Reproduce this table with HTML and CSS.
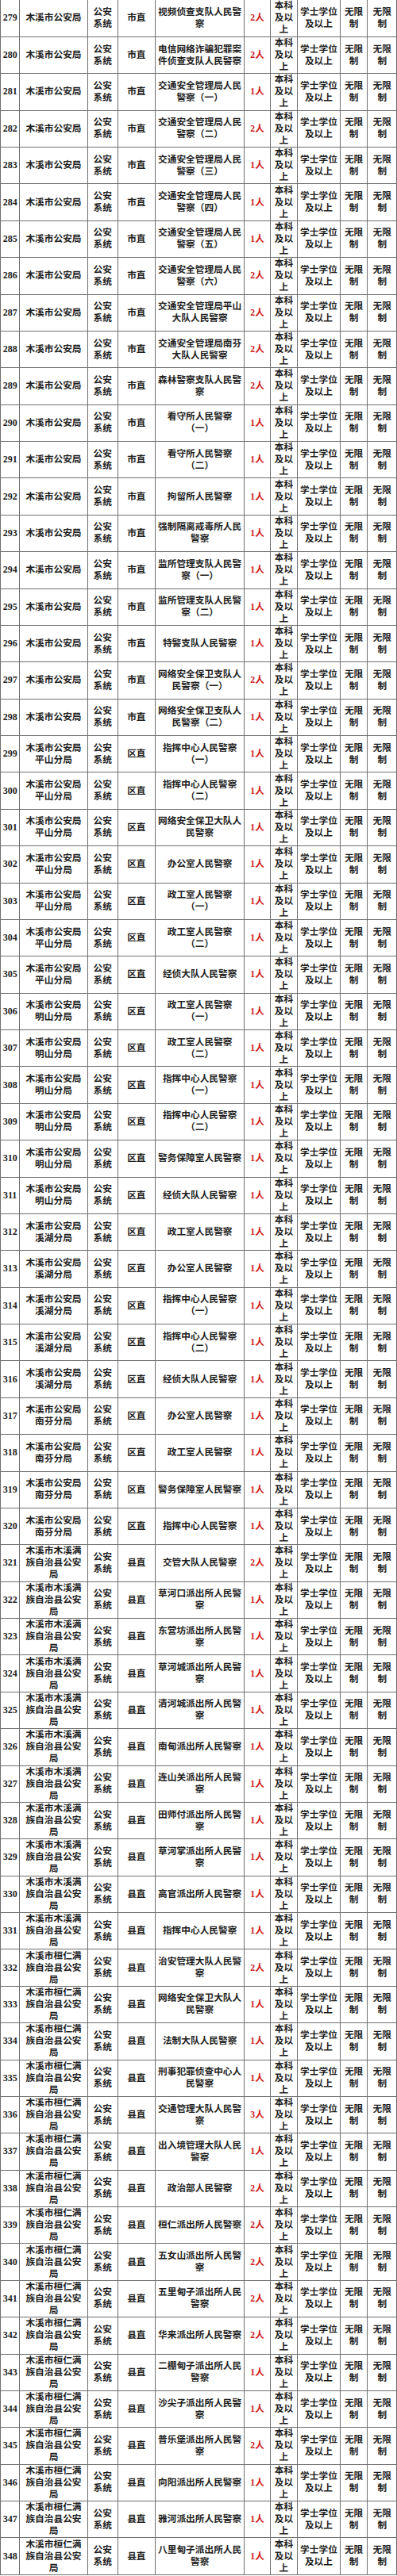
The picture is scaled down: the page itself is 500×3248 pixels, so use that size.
FILE: index.html
```html
<!DOCTYPE html>
<html lang="zh-CN">
<head>
<meta charset="utf-8">
<title>岗位表</title>
<link rel="stylesheet" href="styles.css">
</head>
<body>
<table class="jobs">
<colgroup>
<col class="c1"><col class="c2"><col class="c3"><col class="c4"><col class="c5"><col class="c6"><col class="c7"><col class="c8"><col class="c9"><col class="c10">
</colgroup>
<tbody>
<tr><td class="no">279</td><td>木溪市公安局</td><td>公安<br>系统</td><td>市直</td><td>视频侦查支队人民警<br>察</td><td class="cnt">2人</td><td>本科<br>及以<br>上</td><td>学士学位<br>及以上</td><td>无限<br>制</td><td>无限<br>制</td></tr>
<tr><td class="no">280</td><td>木溪市公安局</td><td>公安<br>系统</td><td>市直</td><td>电信网络诈骗犯罪案<br>件侦查支队人民警察</td><td class="cnt">2人</td><td>本科<br>及以<br>上</td><td>学士学位<br>及以上</td><td>无限<br>制</td><td>无限<br>制</td></tr>
<tr><td class="no">281</td><td>木溪市公安局</td><td>公安<br>系统</td><td>市直</td><td>交通安全管理局人民<br>警察（一）</td><td class="cnt">1人</td><td>本科<br>及以<br>上</td><td>学士学位<br>及以上</td><td>无限<br>制</td><td>无限<br>制</td></tr>
<tr><td class="no">282</td><td>木溪市公安局</td><td>公安<br>系统</td><td>市直</td><td>交通安全管理局人民<br>警察（二）</td><td class="cnt">2人</td><td>本科<br>及以<br>上</td><td>学士学位<br>及以上</td><td>无限<br>制</td><td>无限<br>制</td></tr>
<tr><td class="no">283</td><td>木溪市公安局</td><td>公安<br>系统</td><td>市直</td><td>交通安全管理局人民<br>警察（三）</td><td class="cnt">1人</td><td>本科<br>及以<br>上</td><td>学士学位<br>及以上</td><td>无限<br>制</td><td>无限<br>制</td></tr>
<tr><td class="no">284</td><td>木溪市公安局</td><td>公安<br>系统</td><td>市直</td><td>交通安全管理局人民<br>警察（四）</td><td class="cnt">1人</td><td>本科<br>及以<br>上</td><td>学士学位<br>及以上</td><td>无限<br>制</td><td>无限<br>制</td></tr>
<tr><td class="no">285</td><td>木溪市公安局</td><td>公安<br>系统</td><td>市直</td><td>交通安全管理局人民<br>警察（五）</td><td class="cnt">1人</td><td>本科<br>及以<br>上</td><td>学士学位<br>及以上</td><td>无限<br>制</td><td>无限<br>制</td></tr>
<tr><td class="no">286</td><td>木溪市公安局</td><td>公安<br>系统</td><td>市直</td><td>交通安全管理局人民<br>警察（六）</td><td class="cnt">2人</td><td>本科<br>及以<br>上</td><td>学士学位<br>及以上</td><td>无限<br>制</td><td>无限<br>制</td></tr>
<tr><td class="no">287</td><td>木溪市公安局</td><td>公安<br>系统</td><td>市直</td><td>交通安全管理局平山<br>大队人民警察</td><td class="cnt">2人</td><td>本科<br>及以<br>上</td><td>学士学位<br>及以上</td><td>无限<br>制</td><td>无限<br>制</td></tr>
<tr><td class="no">288</td><td>木溪市公安局</td><td>公安<br>系统</td><td>市直</td><td>交通安全管理局南芬<br>大队人民警察</td><td class="cnt">2人</td><td>本科<br>及以<br>上</td><td>学士学位<br>及以上</td><td>无限<br>制</td><td>无限<br>制</td></tr>
<tr><td class="no">289</td><td>木溪市公安局</td><td>公安<br>系统</td><td>市直</td><td>森林警察支队人民警<br>察</td><td class="cnt">2人</td><td>本科<br>及以<br>上</td><td>学士学位<br>及以上</td><td>无限<br>制</td><td>无限<br>制</td></tr>
<tr><td class="no">290</td><td>木溪市公安局</td><td>公安<br>系统</td><td>市直</td><td>看守所人民警察<br>（一）</td><td class="cnt">1人</td><td>本科<br>及以<br>上</td><td>学士学位<br>及以上</td><td>无限<br>制</td><td>无限<br>制</td></tr>
<tr><td class="no">291</td><td>木溪市公安局</td><td>公安<br>系统</td><td>市直</td><td>看守所人民警察<br>（二）</td><td class="cnt">1人</td><td>本科<br>及以<br>上</td><td>学士学位<br>及以上</td><td>无限<br>制</td><td>无限<br>制</td></tr>
<tr><td class="no">292</td><td>木溪市公安局</td><td>公安<br>系统</td><td>市直</td><td>拘留所人民警察</td><td class="cnt">1人</td><td>本科<br>及以<br>上</td><td>学士学位<br>及以上</td><td>无限<br>制</td><td>无限<br>制</td></tr>
<tr><td class="no">293</td><td>木溪市公安局</td><td>公安<br>系统</td><td>市直</td><td>强制隔离戒毒所人民<br>警察</td><td class="cnt">1人</td><td>本科<br>及以<br>上</td><td>学士学位<br>及以上</td><td>无限<br>制</td><td>无限<br>制</td></tr>
<tr><td class="no">294</td><td>木溪市公安局</td><td>公安<br>系统</td><td>市直</td><td>监所管理支队人民警<br>察（一）</td><td class="cnt">1人</td><td>本科<br>及以<br>上</td><td>学士学位<br>及以上</td><td>无限<br>制</td><td>无限<br>制</td></tr>
<tr><td class="no">295</td><td>木溪市公安局</td><td>公安<br>系统</td><td>市直</td><td>监所管理支队人民警<br>察（二）</td><td class="cnt">1人</td><td>本科<br>及以<br>上</td><td>学士学位<br>及以上</td><td>无限<br>制</td><td>无限<br>制</td></tr>
<tr><td class="no">296</td><td>木溪市公安局</td><td>公安<br>系统</td><td>市直</td><td>特警支队人民警察</td><td class="cnt">1人</td><td>本科<br>及以<br>上</td><td>学士学位<br>及以上</td><td>无限<br>制</td><td>无限<br>制</td></tr>
<tr><td class="no">297</td><td>木溪市公安局</td><td>公安<br>系统</td><td>市直</td><td>网络安全保卫支队人<br>民警察（一）</td><td class="cnt">2人</td><td>本科<br>及以<br>上</td><td>学士学位<br>及以上</td><td>无限<br>制</td><td>无限<br>制</td></tr>
<tr><td class="no">298</td><td>木溪市公安局</td><td>公安<br>系统</td><td>市直</td><td>网络安全保卫支队人<br>民警察（二）</td><td class="cnt">1人</td><td>本科<br>及以<br>上</td><td>学士学位<br>及以上</td><td>无限<br>制</td><td>无限<br>制</td></tr>
<tr><td class="no">299</td><td>木溪市公安局<br>平山分局</td><td>公安<br>系统</td><td>区直</td><td>指挥中心人民警察<br>（一）</td><td class="cnt">1人</td><td>本科<br>及以<br>上</td><td>学士学位<br>及以上</td><td>无限<br>制</td><td>无限<br>制</td></tr>
<tr><td class="no">300</td><td>木溪市公安局<br>平山分局</td><td>公安<br>系统</td><td>区直</td><td>指挥中心人民警察<br>（二）</td><td class="cnt">1人</td><td>本科<br>及以<br>上</td><td>学士学位<br>及以上</td><td>无限<br>制</td><td>无限<br>制</td></tr>
<tr><td class="no">301</td><td>木溪市公安局<br>平山分局</td><td>公安<br>系统</td><td>区直</td><td>网络安全保卫大队人<br>民警察</td><td class="cnt">1人</td><td>本科<br>及以<br>上</td><td>学士学位<br>及以上</td><td>无限<br>制</td><td>无限<br>制</td></tr>
<tr><td class="no">302</td><td>木溪市公安局<br>平山分局</td><td>公安<br>系统</td><td>区直</td><td>办公室人民警察</td><td class="cnt">1人</td><td>本科<br>及以<br>上</td><td>学士学位<br>及以上</td><td>无限<br>制</td><td>无限<br>制</td></tr>
<tr><td class="no">303</td><td>木溪市公安局<br>平山分局</td><td>公安<br>系统</td><td>区直</td><td>政工室人民警察<br>（一）</td><td class="cnt">1人</td><td>本科<br>及以<br>上</td><td>学士学位<br>及以上</td><td>无限<br>制</td><td>无限<br>制</td></tr>
<tr><td class="no">304</td><td>木溪市公安局<br>平山分局</td><td>公安<br>系统</td><td>区直</td><td>政工室人民警察<br>（二）</td><td class="cnt">1人</td><td>本科<br>及以<br>上</td><td>学士学位<br>及以上</td><td>无限<br>制</td><td>无限<br>制</td></tr>
<tr><td class="no">305</td><td>木溪市公安局<br>平山分局</td><td>公安<br>系统</td><td>区直</td><td>经侦大队人民警察</td><td class="cnt">1人</td><td>本科<br>及以<br>上</td><td>学士学位<br>及以上</td><td>无限<br>制</td><td>无限<br>制</td></tr>
<tr><td class="no">306</td><td>木溪市公安局<br>明山分局</td><td>公安<br>系统</td><td>区直</td><td>政工室人民警察<br>（一）</td><td class="cnt">1人</td><td>本科<br>及以<br>上</td><td>学士学位<br>及以上</td><td>无限<br>制</td><td>无限<br>制</td></tr>
<tr><td class="no">307</td><td>木溪市公安局<br>明山分局</td><td>公安<br>系统</td><td>区直</td><td>政工室人民警察<br>（二）</td><td class="cnt">1人</td><td>本科<br>及以<br>上</td><td>学士学位<br>及以上</td><td>无限<br>制</td><td>无限<br>制</td></tr>
<tr><td class="no">308</td><td>木溪市公安局<br>明山分局</td><td>公安<br>系统</td><td>区直</td><td>指挥中心人民警察<br>（一）</td><td class="cnt">1人</td><td>本科<br>及以<br>上</td><td>学士学位<br>及以上</td><td>无限<br>制</td><td>无限<br>制</td></tr>
<tr><td class="no">309</td><td>木溪市公安局<br>明山分局</td><td>公安<br>系统</td><td>区直</td><td>指挥中心人民警察<br>（二）</td><td class="cnt">1人</td><td>本科<br>及以<br>上</td><td>学士学位<br>及以上</td><td>无限<br>制</td><td>无限<br>制</td></tr>
<tr><td class="no">310</td><td>木溪市公安局<br>明山分局</td><td>公安<br>系统</td><td>区直</td><td>警务保障室人民警察</td><td class="cnt">1人</td><td>本科<br>及以<br>上</td><td>学士学位<br>及以上</td><td>无限<br>制</td><td>无限<br>制</td></tr>
<tr><td class="no">311</td><td>木溪市公安局<br>明山分局</td><td>公安<br>系统</td><td>区直</td><td>经侦大队人民警察</td><td class="cnt">1人</td><td>本科<br>及以<br>上</td><td>学士学位<br>及以上</td><td>无限<br>制</td><td>无限<br>制</td></tr>
<tr><td class="no">312</td><td>木溪市公安局<br>溪湖分局</td><td>公安<br>系统</td><td>区直</td><td>政工室人民警察</td><td class="cnt">1人</td><td>本科<br>及以<br>上</td><td>学士学位<br>及以上</td><td>无限<br>制</td><td>无限<br>制</td></tr>
<tr><td class="no">313</td><td>木溪市公安局<br>溪湖分局</td><td>公安<br>系统</td><td>区直</td><td>办公室人民警察</td><td class="cnt">1人</td><td>本科<br>及以<br>上</td><td>学士学位<br>及以上</td><td>无限<br>制</td><td>无限<br>制</td></tr>
<tr><td class="no">314</td><td>木溪市公安局<br>溪湖分局</td><td>公安<br>系统</td><td>区直</td><td>指挥中心人民警察<br>（一）</td><td class="cnt">1人</td><td>本科<br>及以<br>上</td><td>学士学位<br>及以上</td><td>无限<br>制</td><td>无限<br>制</td></tr>
<tr><td class="no">315</td><td>木溪市公安局<br>溪湖分局</td><td>公安<br>系统</td><td>区直</td><td>指挥中心人民警察<br>（二）</td><td class="cnt">1人</td><td>本科<br>及以<br>上</td><td>学士学位<br>及以上</td><td>无限<br>制</td><td>无限<br>制</td></tr>
<tr><td class="no">316</td><td>木溪市公安局<br>溪湖分局</td><td>公安<br>系统</td><td>区直</td><td>经侦大队人民警察</td><td class="cnt">1人</td><td>本科<br>及以<br>上</td><td>学士学位<br>及以上</td><td>无限<br>制</td><td>无限<br>制</td></tr>
<tr><td class="no">317</td><td>木溪市公安局<br>南芬分局</td><td>公安<br>系统</td><td>区直</td><td>办公室人民警察</td><td class="cnt">1人</td><td>本科<br>及以<br>上</td><td>学士学位<br>及以上</td><td>无限<br>制</td><td>无限<br>制</td></tr>
<tr><td class="no">318</td><td>木溪市公安局<br>南芬分局</td><td>公安<br>系统</td><td>区直</td><td>政工室人民警察</td><td class="cnt">1人</td><td>本科<br>及以<br>上</td><td>学士学位<br>及以上</td><td>无限<br>制</td><td>无限<br>制</td></tr>
<tr><td class="no">319</td><td>木溪市公安局<br>南芬分局</td><td>公安<br>系统</td><td>区直</td><td>警务保障室人民警察</td><td class="cnt">1人</td><td>本科<br>及以<br>上</td><td>学士学位<br>及以上</td><td>无限<br>制</td><td>无限<br>制</td></tr>
<tr><td class="no">320</td><td>木溪市公安局<br>南芬分局</td><td>公安<br>系统</td><td>区直</td><td>指挥中心人民警察</td><td class="cnt">1人</td><td>本科<br>及以<br>上</td><td>学士学位<br>及以上</td><td>无限<br>制</td><td>无限<br>制</td></tr>
<tr><td class="no">321</td><td>木溪市木溪满<br>族自治县公安<br>局</td><td>公安<br>系统</td><td>县直</td><td>交管大队人民警察</td><td class="cnt">2人</td><td>本科<br>及以<br>上</td><td>学士学位<br>及以上</td><td>无限<br>制</td><td>无限<br>制</td></tr>
<tr><td class="no">322</td><td>木溪市木溪满<br>族自治县公安<br>局</td><td>公安<br>系统</td><td>县直</td><td>草河口派出所人民警<br>察</td><td class="cnt">1人</td><td>本科<br>及以<br>上</td><td>学士学位<br>及以上</td><td>无限<br>制</td><td>无限<br>制</td></tr>
<tr><td class="no">323</td><td>木溪市木溪满<br>族自治县公安<br>局</td><td>公安<br>系统</td><td>县直</td><td>东营坊派出所人民警<br>察</td><td class="cnt">1人</td><td>本科<br>及以<br>上</td><td>学士学位<br>及以上</td><td>无限<br>制</td><td>无限<br>制</td></tr>
<tr><td class="no">324</td><td>木溪市木溪满<br>族自治县公安<br>局</td><td>公安<br>系统</td><td>县直</td><td>草河城派出所人民警<br>察</td><td class="cnt">1人</td><td>本科<br>及以<br>上</td><td>学士学位<br>及以上</td><td>无限<br>制</td><td>无限<br>制</td></tr>
<tr><td class="no">325</td><td>木溪市木溪满<br>族自治县公安<br>局</td><td>公安<br>系统</td><td>县直</td><td>清河城派出所人民警<br>察</td><td class="cnt">1人</td><td>本科<br>及以<br>上</td><td>学士学位<br>及以上</td><td>无限<br>制</td><td>无限<br>制</td></tr>
<tr><td class="no">326</td><td>木溪市木溪满<br>族自治县公安<br>局</td><td>公安<br>系统</td><td>县直</td><td>南甸派出所人民警察</td><td class="cnt">1人</td><td>本科<br>及以<br>上</td><td>学士学位<br>及以上</td><td>无限<br>制</td><td>无限<br>制</td></tr>
<tr><td class="no">327</td><td>木溪市木溪满<br>族自治县公安<br>局</td><td>公安<br>系统</td><td>县直</td><td>连山关派出所人民警<br>察</td><td class="cnt">1人</td><td>本科<br>及以<br>上</td><td>学士学位<br>及以上</td><td>无限<br>制</td><td>无限<br>制</td></tr>
<tr><td class="no">328</td><td>木溪市木溪满<br>族自治县公安<br>局</td><td>公安<br>系统</td><td>县直</td><td>田师付派出所人民警<br>察</td><td class="cnt">1人</td><td>本科<br>及以<br>上</td><td>学士学位<br>及以上</td><td>无限<br>制</td><td>无限<br>制</td></tr>
<tr><td class="no">329</td><td>木溪市木溪满<br>族自治县公安<br>局</td><td>公安<br>系统</td><td>县直</td><td>草河掌派出所人民警<br>察</td><td class="cnt">1人</td><td>本科<br>及以<br>上</td><td>学士学位<br>及以上</td><td>无限<br>制</td><td>无限<br>制</td></tr>
<tr><td class="no">330</td><td>木溪市木溪满<br>族自治县公安<br>局</td><td>公安<br>系统</td><td>县直</td><td>高官派出所人民警察</td><td class="cnt">1人</td><td>本科<br>及以<br>上</td><td>学士学位<br>及以上</td><td>无限<br>制</td><td>无限<br>制</td></tr>
<tr><td class="no">331</td><td>木溪市木溪满<br>族自治县公安<br>局</td><td>公安<br>系统</td><td>县直</td><td>指挥中心人民警察</td><td class="cnt">1人</td><td>本科<br>及以<br>上</td><td>学士学位<br>及以上</td><td>无限<br>制</td><td>无限<br>制</td></tr>
<tr><td class="no">332</td><td>木溪市桓仁满<br>族自治县公安<br>局</td><td>公安<br>系统</td><td>县直</td><td>治安管理大队人民警<br>察</td><td class="cnt">2人</td><td>本科<br>及以<br>上</td><td>学士学位<br>及以上</td><td>无限<br>制</td><td>无限<br>制</td></tr>
<tr><td class="no">333</td><td>木溪市桓仁满<br>族自治县公安<br>局</td><td>公安<br>系统</td><td>县直</td><td>网络安全保卫大队人<br>民警察</td><td class="cnt">1人</td><td>本科<br>及以<br>上</td><td>学士学位<br>及以上</td><td>无限<br>制</td><td>无限<br>制</td></tr>
<tr><td class="no">334</td><td>木溪市桓仁满<br>族自治县公安<br>局</td><td>公安<br>系统</td><td>县直</td><td>法制大队人民警察</td><td class="cnt">1人</td><td>本科<br>及以<br>上</td><td>学士学位<br>及以上</td><td>无限<br>制</td><td>无限<br>制</td></tr>
<tr><td class="no">335</td><td>木溪市桓仁满<br>族自治县公安<br>局</td><td>公安<br>系统</td><td>县直</td><td>刑事犯罪侦查中心人<br>民警察</td><td class="cnt">1人</td><td>本科<br>及以<br>上</td><td>学士学位<br>及以上</td><td>无限<br>制</td><td>无限<br>制</td></tr>
<tr><td class="no">336</td><td>木溪市桓仁满<br>族自治县公安<br>局</td><td>公安<br>系统</td><td>县直</td><td>交通管理大队人民警<br>察</td><td class="cnt">3人</td><td>本科<br>及以<br>上</td><td>学士学位<br>及以上</td><td>无限<br>制</td><td>无限<br>制</td></tr>
<tr><td class="no">337</td><td>木溪市桓仁满<br>族自治县公安<br>局</td><td>公安<br>系统</td><td>县直</td><td>出入境管理大队人民<br>警察</td><td class="cnt">1人</td><td>本科<br>及以<br>上</td><td>学士学位<br>及以上</td><td>无限<br>制</td><td>无限<br>制</td></tr>
<tr><td class="no">338</td><td>木溪市桓仁满<br>族自治县公安<br>局</td><td>公安<br>系统</td><td>县直</td><td>政治部人民警察</td><td class="cnt">2人</td><td>本科<br>及以<br>上</td><td>学士学位<br>及以上</td><td>无限<br>制</td><td>无限<br>制</td></tr>
<tr><td class="no">339</td><td>木溪市桓仁满<br>族自治县公安<br>局</td><td>公安<br>系统</td><td>县直</td><td>桓仁派出所人民警察</td><td class="cnt">2人</td><td>本科<br>及以<br>上</td><td>学士学位<br>及以上</td><td>无限<br>制</td><td>无限<br>制</td></tr>
<tr><td class="no">340</td><td>木溪市桓仁满<br>族自治县公安<br>局</td><td>公安<br>系统</td><td>县直</td><td>五女山派出所人民警<br>察</td><td class="cnt">2人</td><td>本科<br>及以<br>上</td><td>学士学位<br>及以上</td><td>无限<br>制</td><td>无限<br>制</td></tr>
<tr><td class="no">341</td><td>木溪市桓仁满<br>族自治县公安<br>局</td><td>公安<br>系统</td><td>县直</td><td>五里甸子派出所人民<br>警察</td><td class="cnt">2人</td><td>本科<br>及以<br>上</td><td>学士学位<br>及以上</td><td>无限<br>制</td><td>无限<br>制</td></tr>
<tr><td class="no">342</td><td>木溪市桓仁满<br>族自治县公安<br>局</td><td>公安<br>系统</td><td>县直</td><td>华来派出所人民警察</td><td class="cnt">2人</td><td>本科<br>及以<br>上</td><td>学士学位<br>及以上</td><td>无限<br>制</td><td>无限<br>制</td></tr>
<tr><td class="no">343</td><td>木溪市桓仁满<br>族自治县公安<br>局</td><td>公安<br>系统</td><td>县直</td><td>二棚甸子派出所人民<br>警察</td><td class="cnt">1人</td><td>本科<br>及以<br>上</td><td>学士学位<br>及以上</td><td>无限<br>制</td><td>无限<br>制</td></tr>
<tr><td class="no">344</td><td>木溪市桓仁满<br>族自治县公安<br>局</td><td>公安<br>系统</td><td>县直</td><td>沙尖子派出所人民警<br>察</td><td class="cnt">1人</td><td>本科<br>及以<br>上</td><td>学士学位<br>及以上</td><td>无限<br>制</td><td>无限<br>制</td></tr>
<tr><td class="no">345</td><td>木溪市桓仁满<br>族自治县公安<br>局</td><td>公安<br>系统</td><td>县直</td><td>普乐堡派出所人民警<br>察</td><td class="cnt">2人</td><td>本科<br>及以<br>上</td><td>学士学位<br>及以上</td><td>无限<br>制</td><td>无限<br>制</td></tr>
<tr><td class="no">346</td><td>木溪市桓仁满<br>族自治县公安<br>局</td><td>公安<br>系统</td><td>县直</td><td>向阳派出所人民警察</td><td class="cnt">1人</td><td>本科<br>及以<br>上</td><td>学士学位<br>及以上</td><td>无限<br>制</td><td>无限<br>制</td></tr>
<tr><td class="no">347</td><td>木溪市桓仁满<br>族自治县公安<br>局</td><td>公安<br>系统</td><td>县直</td><td>雅河派出所人民警察</td><td class="cnt">1人</td><td>本科<br>及以<br>上</td><td>学士学位<br>及以上</td><td>无限<br>制</td><td>无限<br>制</td></tr>
<tr><td class="no">348</td><td>木溪市桓仁满<br>族自治县公安<br>局</td><td>公安<br>系统</td><td>县直</td><td>八里甸子派出所人民<br>警察</td><td class="cnt">1人</td><td>本科<br>及以<br>上</td><td>学士学位<br>及以上</td><td>无限<br>制</td><td>无限<br>制</td></tr>
</tbody>
</table>
</body>
</html>
```

FILE: styles.css
```css
html, body {
  margin: 0;
  padding: 0;
  background: #ffffff;
}

.jobs {
  width: 499.5px;
  border-collapse: collapse;
  table-layout: fixed;
  font-family: "Liberation Serif", "Noto Sans CJK SC", serif;
  font-weight: 700;
  font-size: 11.7px;
  line-height: 15px;
  color: #1e1e1e;
}

.c1 { width: 24.3px; }
.c2 { width: 85.4px; }
.c3 { width: 38px; }
.c4 { width: 47.3px; }
.c5 { width: 112.3px; }
.c6 { width: 32.7px; }
.c7 { width: 34px; }
.c8 { width: 54px; }
.c9 { width: 34.3px; }
.c10 { width: 37px; }

.jobs tr {
  height: 46.38px;
}

.jobs td {
  border: 1px solid #6e6e6e;
  padding: 0;
  text-align: center;
  vertical-align: middle;
  white-space: nowrap;
  overflow: hidden;
}

.jobs tr:first-child td {
  border-top: none;
}

.jobs .no {
  font-size: 12px;
}

.jobs .cnt {
  color: #d0201c;
}
```
